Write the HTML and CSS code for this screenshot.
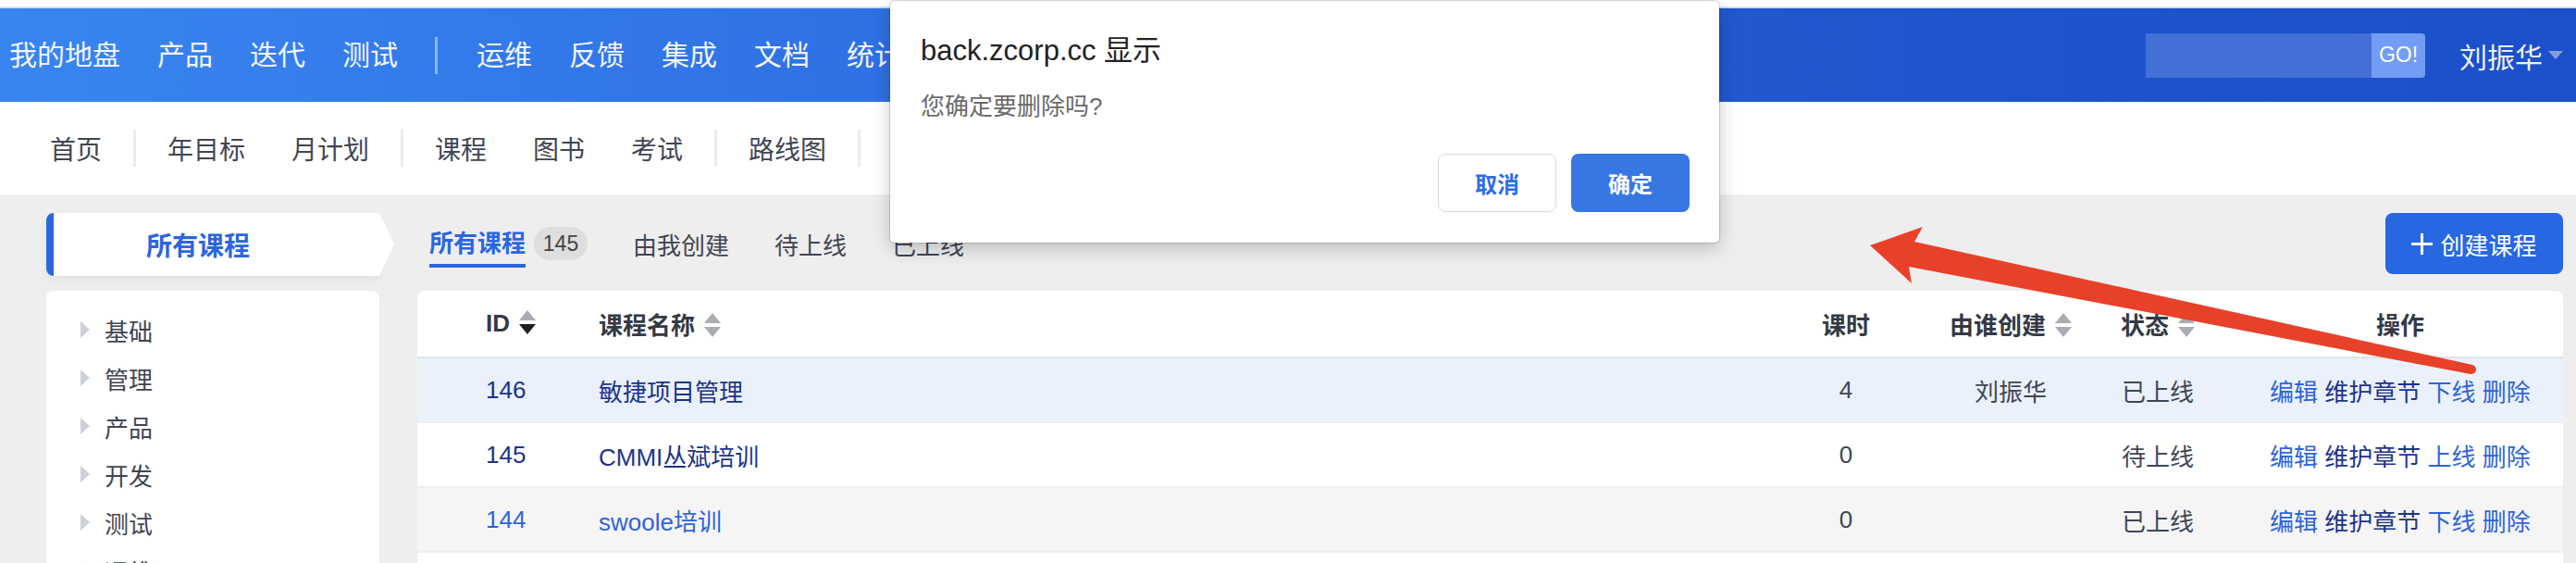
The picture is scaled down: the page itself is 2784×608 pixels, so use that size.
FILE: index.html
```html
<!DOCTYPE html>
<html lang="zh-CN">
  <head>
    <meta charset="UTF-8" />
    <meta name="viewport" content="width=device-width, initial-scale=1.0" />
    <title>课程</title>
    <link rel="stylesheet" href="styles.css">
  </head>
  <body>
    <div class="topstrip"></div>

    <!-- barre principale -->
    <header class="header">
      <nav class="mainnav">
        <a>我的地盘</a>
        <a>产品</a>
        <a>迭代</a>
        <a>测试</a>
        <span class="divider"></span>
        <a>运维</a>
        <a>反馈</a>
        <a>集成</a>
        <a>文档</a>
        <a>统计</a>
      </nav>
      <div class="header-right">
        <form class="search">
          <input type="text" />
          <button type="button">GO!</button>
        </form>
        <div class="user">刘振华<span class="caret"></span></div>
      </div>
    </header>

    <!-- sous-menu -->
    <nav class="subnav">
      <a>首页</a>
      <span class="sep"></span>
      <a>年目标</a>
      <a>月计划</a>
      <span class="sep"></span>
      <a>课程</a>
      <a>图书</a>
      <a>考试</a>
      <span class="sep"></span>
      <a>路线图</a>
      <span class="sep"></span>
      <a>管理</a>
    </nav>

    <div class="main">
      <aside class="sidebar">
        <div class="side-head">所有课程</div>
        <ul class="tree">
          <li><span class="tri"></span>基础</li>
          <li><span class="tri"></span>管理</li>
          <li><span class="tri"></span>产品</li>
          <li><span class="tri"></span>开发</li>
          <li><span class="tri"></span>测试</li>
          <li><span class="tri"></span>运维</li>
        </ul>
      </aside>

      <section class="content">
        <div class="toolbar">
          <div class="tabs">
            <a class="tab active"><span class="tab-label">所有课程</span><span class="badge">145</span></a>
            <a class="tab">由我创建</a>
            <a class="tab">待上线</a>
            <a class="tab">已上线</a>
          </div>
          <button class="btn-create" type="button">
            <svg width="23" height="23" viewBox="0 0 23 23"><path d="M11.5 0 V23 M0 11.5 H23" stroke="#fff" stroke-width="3" /></svg>
            创建课程
          </button>
        </div>

        <div class="table-card">
          <table class="course-table">
            <colgroup>
              <col class="c-id" />
              <col />
              <col class="c-hours" />
              <col class="c-creator" />
              <col class="c-status" />
              <col class="c-actions" />
            </colgroup>
            <thead>
              <tr>
                <th class="left id">ID<svg class="sort" width="18" height="26" viewBox="0 0 18 26"><path d="M9 0 L18 11 H0 Z" fill="#a9adb4" /><path d="M0 15 H18 L9 26 Z" fill="#1f1f1f" /></svg></th>
                <th class="left">课程名称<svg class="sort" width="18" height="26" viewBox="0 0 18 26"><path d="M9 0 L18 11 H0 Z" fill="#a9adb4" /><path d="M0 15 H18 L9 26 Z" fill="#a9adb4" /></svg></th>
                <th>课时</th>
                <th>由谁创建<svg class="sort" width="18" height="26" viewBox="0 0 18 26"><path d="M9 0 L18 11 H0 Z" fill="#a9adb4" /><path d="M0 15 H18 L9 26 Z" fill="#a9adb4" /></svg></th>
                <th>状态<svg class="sort" width="18" height="26" viewBox="0 0 18 26"><path d="M9 0 L18 11 H0 Z" fill="#a9adb4" /><path d="M0 15 H18 L9 26 Z" fill="#a9adb4" /></svg></th>
                <th>操作</th>
              </tr>
            </thead>
            <tbody>
              <tr class="hover">
                <td class="left id"><a class="visited">146</a></td>
                <td class="left"><a class="visited">敏捷项目管理</a></td>
                <td>4</td>
                <td>刘振华</td>
                <td>已上线</td>
                <td class="actions"><a>编辑</a> <a class="visited">维护章节</a> <a>下线</a> <a>删除</a></td>
              </tr>
              <tr>
                <td class="left id"><a class="visited">145</a></td>
                <td class="left"><a class="visited">CMMI丛斌培训</a></td>
                <td>0</td>
                <td></td>
                <td>待上线</td>
                <td class="actions"><a>编辑</a> <a class="visited">维护章节</a> <a>上线</a> <a>删除</a></td>
              </tr>
              <tr class="stripe">
                <td class="left id"><a>144</a></td>
                <td class="left"><a>swoole培训</a></td>
                <td>0</td>
                <td></td>
                <td>已上线</td>
                <td class="actions"><a>编辑</a> <a class="visited">维护章节</a> <a>下线</a> <a>删除</a></td>
              </tr>
            </tbody>
          </table>
        </div>
      </section>
    </div>

    <!-- boîte de confirmation du navigateur -->
    <div class="dialog">
      <div class="dialog-title">back.zcorp.cc 显示</div>
      <div class="dialog-msg">您确定要删除吗?</div>
      <div class="dialog-btns">
        <button class="btn-cancel" type="button">取消</button>
        <button class="btn-ok" type="button">确定</button>
      </div>
    </div>

    <!-- flèche d'annotation -->
    <svg class="annot" width="2784" height="608" viewBox="0 0 2784 608">
      <polygon fill="#e8412a" points="2021,265 2078,245 2069,261 2672,394 2670,404 2063,288 2066,306" />
      <circle fill="#e8412a" cx="2671" cy="399" r="5" />
    </svg>
  </body>
</html>
```

FILE: styles.css
```css
* {
  box-sizing: border-box;
}
body {
  margin: 0;
  width: 2784px;
  height: 608px;
  overflow: hidden;
  position: relative;
  background: #eeeeee;
  font-family: "Liberation Sans", "Noto Sans CJK SC", sans-serif;
  color: #3f4654;
}
a {
  text-decoration: none;
  color: inherit;
}
button {
  font-family: inherit;
  cursor: pointer;
}
ul {
  margin: 0;
  padding: 0;
  list-style: none;
}

.topstrip {
  height: 9px;
  background: #fff;
  border-bottom: 2px solid #dcdcdc;
}

/* header */
.header {
  height: 101px;
  display: flex;
  align-items: center;
  justify-content: space-between;
  padding: 0 14px 0 10px;
  background: linear-gradient(90deg, #3985f0 0%, #2f70e4 35%, #2259d0 65%, #1d53cc 80%, #1c50ca 100%);
  color: #f2f5ff;
}
.mainnav {
  display: flex;
  align-items: center;
  font-size: 30px;
  line-height: 1;
}
.mainnav a {
  margin-right: 40px;
}
.divider {
  width: 3px;
  height: 40px;
  background: rgba(255, 255, 255, 0.45);
  margin-right: 42px;
}
.header-right {
  display: flex;
  align-items: center;
}
.search {
  display: flex;
  margin: 0;
}
.search input {
  width: 244px;
  height: 48px;
  border: 0;
  background: #436fd7;
  outline: none;
}
.search button {
  width: 58px;
  height: 48px;
  border: 0;
  border-radius: 0 4px 4px 0;
  background: #739cf5;
  color: #fff;
  font-size: 23px;
  padding: 0;
}
.user {
  margin-left: 37px;
  font-size: 30px;
  display: flex;
  align-items: center;
  color: #eef2ff;
}
.caret {
  margin-left: 6px;
  width: 0;
  height: 0;
  border-left: 8px solid transparent;
  border-right: 8px solid transparent;
  border-top: 9px solid rgba(255, 255, 255, 0.45);
}

/* sub navigation */
.subnav {
  height: 100px;
  background: #fff;
  display: flex;
  align-items: center;
  padding-left: 29px;
  font-size: 28px;
  color: #3f4654;
}
.subnav a {
  margin: 0 25px;
}
.subnav .sep {
  width: 3px;
  height: 40px;
  background: #ececec;
  margin: 0 9px;
}

/* main area */
.main {
  display: flex;
  gap: 41px;
  padding: 20px 14px 0 50px;
}
.sidebar {
  width: 360px;
  flex: none;
}
.side-head {
  position: relative;
  height: 68px;
  display: flex;
  align-items: center;
  justify-content: center;
  padding-right: 40px;
  background: #fff;
  border-left: 8px solid #2a66e0;
  border-radius: 8px 0 0 8px;
  box-shadow: 0 4px 8px rgba(0, 0, 0, 0.05);
  color: #2a66e0;
  font-size: 28px;
  font-weight: bold;
}
.side-head::after {
  content: "";
  position: absolute;
  left: 100%;
  top: 0;
  width: 16px;
  height: 68px;
  background: #fff;
  clip-path: polygon(0 0, 100% 50%, 0 100%);
}
.tree {
  margin-top: 16px;
  height: 400px;
  background: #fff;
  border-radius: 8px;
  padding: 16px 0 0 37px;
  font-size: 26px;
  color: #3f4654;
}
.tree li {
  height: 52px;
  display: flex;
  align-items: center;
}
.tri {
  width: 0;
  height: 0;
  border-left: 10px solid #cbd0da;
  border-top: 9px solid transparent;
  border-bottom: 9px solid transparent;
  margin-right: 16px;
}

.content {
  flex: 1;
  min-width: 0;
}
.toolbar {
  height: 66px;
  display: flex;
  align-items: center;
  justify-content: space-between;
}
.tabs {
  display: flex;
  align-items: center;
  padding-left: 13px;
  font-size: 26px;
}
.tab {
  display: flex;
  align-items: center;
  height: 66px;
  margin-right: 49px;
  color: #3f4654;
}
.tab-label {
  position: relative;
  display: inline-block;
  line-height: 30px;
}
.tab.active .tab-label {
  color: #2a66e0;
  font-weight: bold;
}
.tab.active .tab-label::after {
  content: "";
  position: absolute;
  left: 0;
  right: 0;
  top: 37px;
  height: 4px;
  background: #2a66e0;
}
.badge {
  margin-left: 9px;
  width: 58px;
  height: 36px;
  border-radius: 18px;
  background: #dedede;
  color: #444;
  font-size: 23px;
  display: flex;
  align-items: center;
  justify-content: center;
}
.btn-create {
  width: 192px;
  height: 66px;
  border: 0;
  border-radius: 8px;
  background: #2767e2;
  color: #fff;
  font-size: 26px;
  display: flex;
  align-items: center;
  justify-content: center;
  gap: 8px;
  padding: 0;
}

/* table */
.table-card {
  margin-top: 18px;
  height: 400px;
  background: #fff;
  border-radius: 8px 8px 0 0;
  overflow: hidden;
}
.course-table {
  width: 100%;
  border-collapse: collapse;
  table-layout: fixed;
  font-size: 26px;
}
.c-id {
  width: 172px;
}
.c-hours {
  width: 210px;
}
.c-creator {
  width: 146px;
}
.c-status {
  width: 172px;
}
.c-actions {
  width: 352px;
}
.course-table th {
  height: 72px;
  font-weight: bold;
  color: #333a45;
  text-align: center;
  white-space: nowrap;
  border-bottom: 2px solid #dfe2e7;
  padding: 0;
}
.course-table td {
  height: 70px;
  text-align: center;
  color: #3f4654;
  border-bottom: 2px solid #eeeeee;
  white-space: nowrap;
  padding: 0;
}
.course-table .left {
  text-align: left;
  padding-left: 24px;
}
.course-table .id {
  padding-left: 74px;
}
.sort {
  margin-left: 10px;
  vertical-align: -3px;
}
.course-table tr.hover td {
  background: #eaf1fa;
}
.course-table tr.stripe td {
  background: #f5f5f5;
}
.course-table a {
  color: #2e63d8;
}
.course-table a.visited {
  color: #1c338a;
}
.actions a {
  color: #2f64d9;
}

/* browser dialog */
.dialog {
  position: absolute;
  left: 962px;
  top: 1px;
  width: 896px;
  height: 261px;
  padding: 34px 32px 0 33px;
  background: #fff;
  border-radius: 5px;
  box-shadow: 0 0 0 1px rgba(0, 0, 0, 0.13), 0 6px 20px rgba(0, 0, 0, 0.22);
}
.dialog-title {
  font-size: 31px;
  line-height: 40px;
  color: #222;
}
.dialog-msg {
  margin-top: 22px;
  font-size: 26px;
  line-height: 36px;
  color: #6a6a6a;
}
.dialog-btns {
  margin-top: 33px;
  display: flex;
  justify-content: flex-end;
  gap: 16px;
}
.dialog-btns button {
  width: 128px;
  height: 63px;
  border-radius: 8px;
  font-size: 24px;
  font-weight: bold;
}
.btn-cancel {
  background: #fff;
  border: 1px solid #d9d9d9;
  color: #2f6de0;
}
.btn-ok {
  background: #3777e1;
  border: 0;
  color: #fff;
}

.annot {
  position: absolute;
  left: 0;
  top: 0;
  pointer-events: none;
}
```
